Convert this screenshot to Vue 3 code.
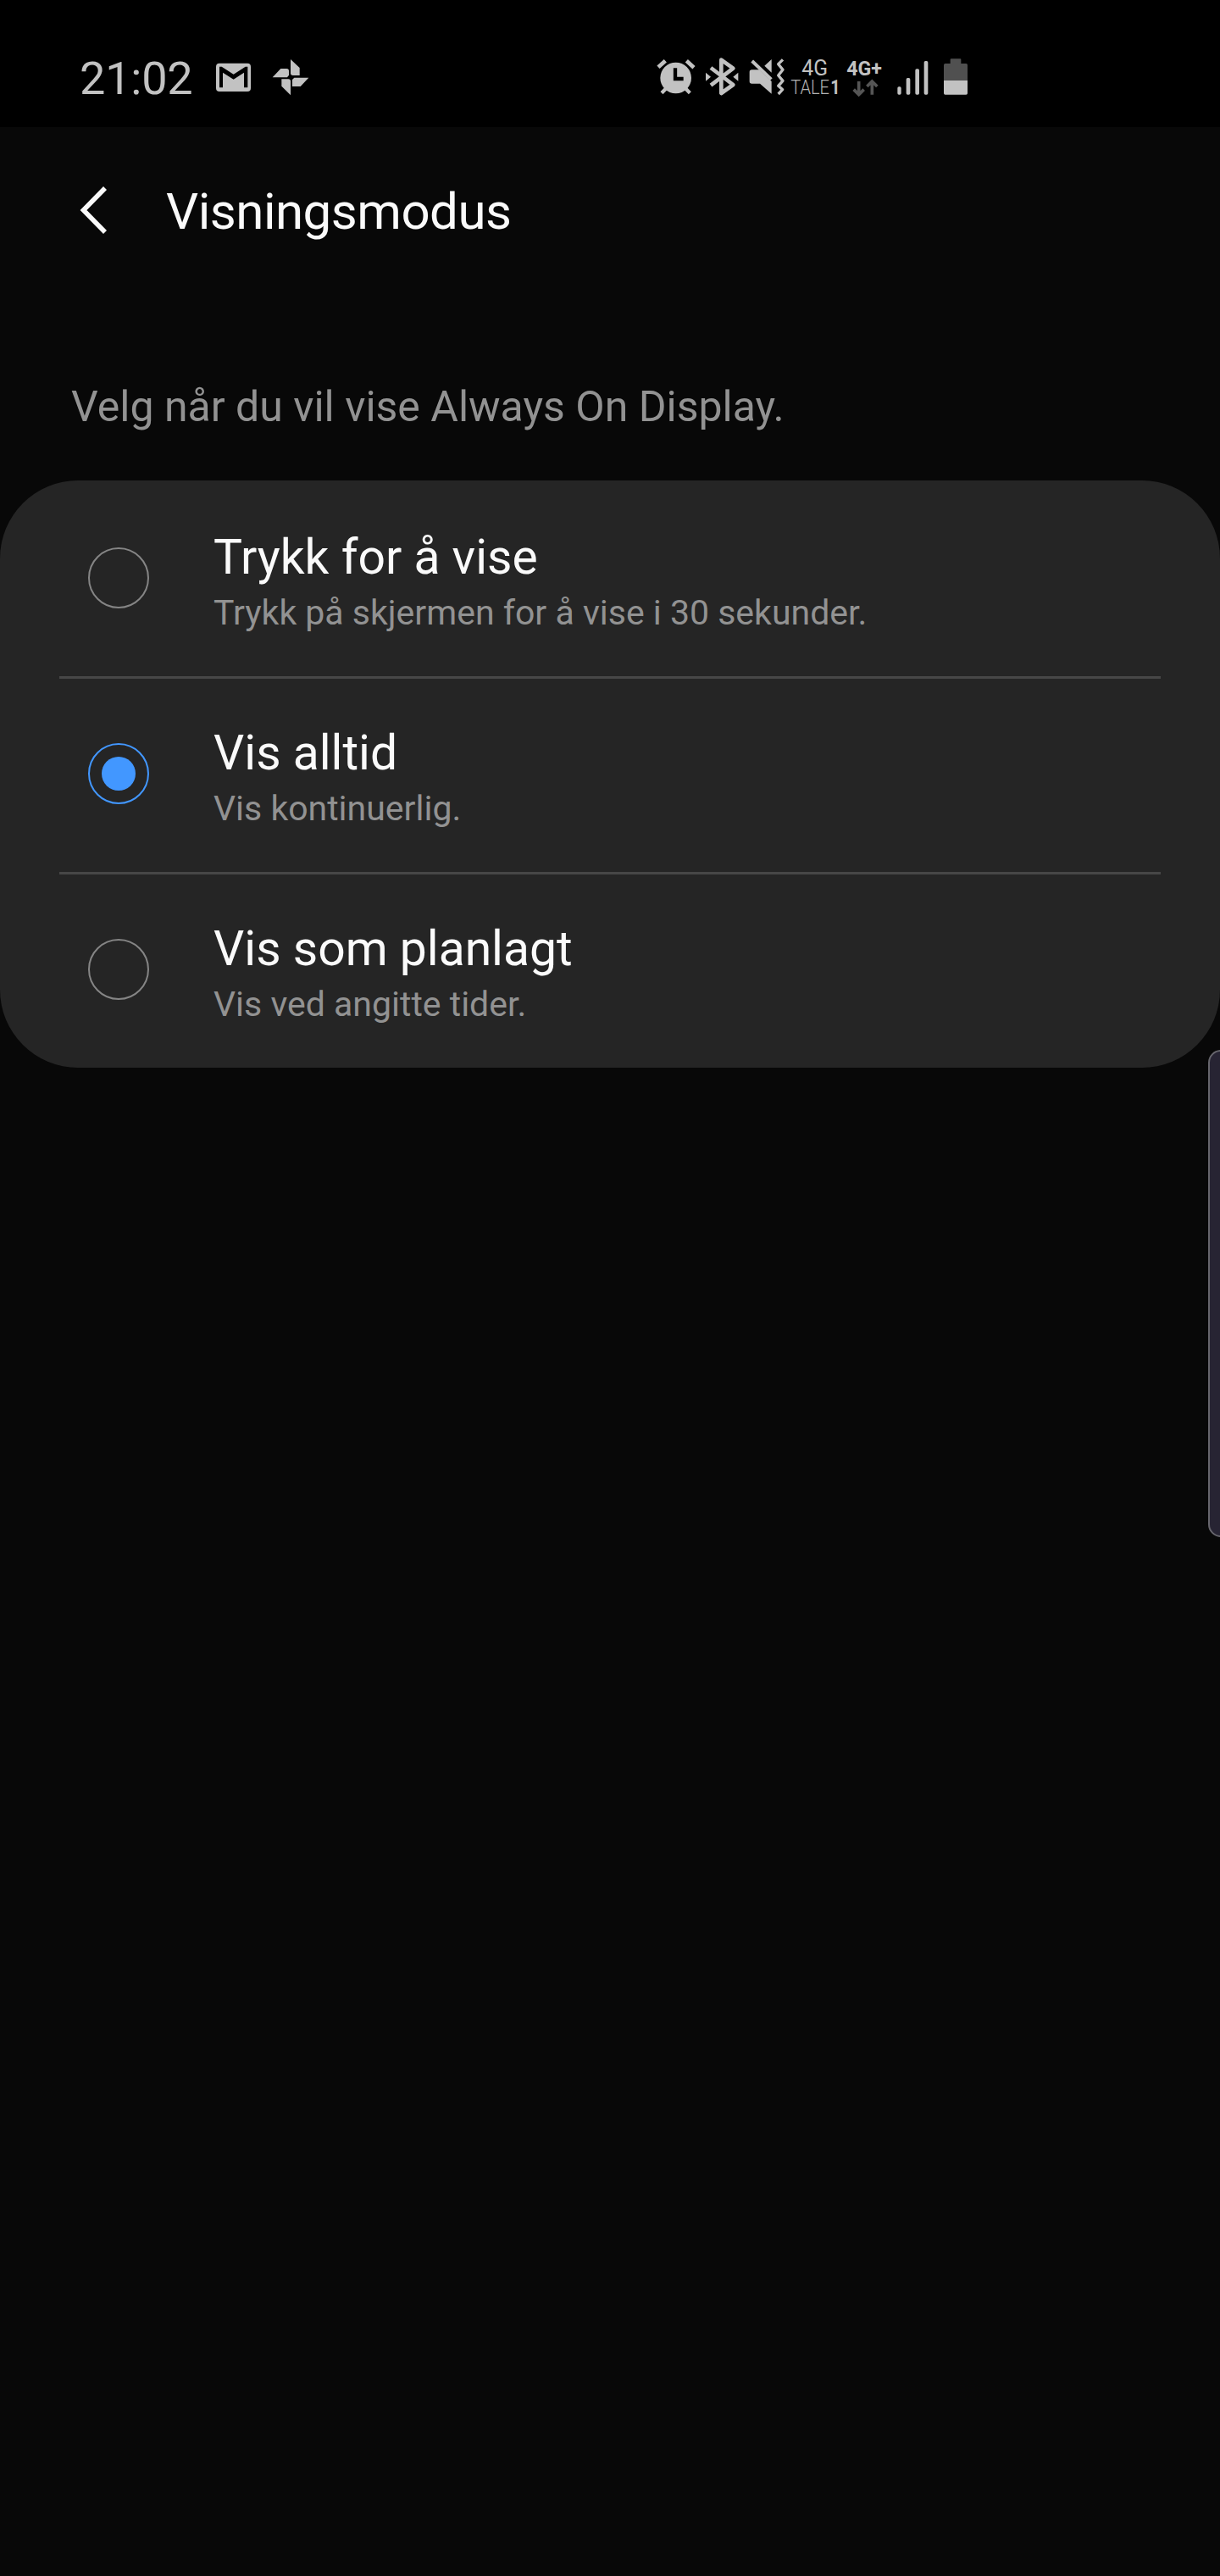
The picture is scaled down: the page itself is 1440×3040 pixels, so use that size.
<script setup>
import { ref } from 'vue'

const selected = ref('always')
const options = [
  { id: 'tap', title: 'Trykk for å vise', note: 'Trykk på skjermen for å vise i 30 sekunder.' },
  { id: 'always', title: 'Vis alltid', note: 'Vis kontinuerlig.' },
  { id: 'schedule', title: 'Vis som planlagt', note: 'Vis ved angitte tider.' },
]
</script>

<template>
  <div class="screen">
    <div class="status">
      <span class="clock">21:02</span>
      <svg class="mail" width="41" height="50" viewBox="525 45 123 150">
        <rect x="525" y="74" width="123" height="100" rx="12" fill="#c2c2c2" />
        <path d="M537 160V86H545L587 113L629 86H637V160H624V107L587 131L549 107V160Z" fill="#000" />
      </svg>
      <svg class="pinwheel" width="44" height="50" viewBox="721 45 132 150" fill="#c2c2c2">
        <path d="M787 60L819 90V117H795Q787 117 787 109Z" />
        <path d="M723 124L752 93H773Q781 93 781 101V116L775 124Z" />
        <path d="M755 130H779Q787 130 787 138V187L755 155Z" />
        <path d="M800 125H851L822 156H793V132Z" />
      </svg>
      <div class="system">
        <svg class="alarm" width="46" height="50" viewBox="46 45 138 150">
          <circle cx="114" cy="126" r="55" fill="#c2c2c2" />
          <path d="M52 88L77 65M152 65L178 89" stroke="#c2c2c2" stroke-width="14" />
          <path d="M64 179L80 163M148 163L164 179" stroke="#c2c2c2" stroke-width="13" />
          <path d="M112 91V129H141" stroke="#000" stroke-width="13" fill="none" />
        </svg>
        <svg class="bluetooth" width="40" height="50" viewBox="217 45 120 150">
          <path d="M238 90L317 150L275 180V62L317 92L238 152" fill="none" stroke="#c2c2c2" stroke-width="14" stroke-linejoin="round" />
          <path d="M220 107L238 122L220 137ZM335 107L317 122L335 137Z" fill="#c2c2c2" />
        </svg>
        <svg class="mute" width="42" height="50" viewBox="373 45 126 150">
          <path d="M383 97H409L453 138V182L412 146H383Q375 146 375 138V105Q375 97 383 97Z" fill="#c2c2c2" />
          <path d="M428 83L453 60V107Z" fill="#c2c2c2" />
          <path d="M384 66L452 131" stroke="#c2c2c2" stroke-width="12" />
          <path d="M493 61L477 77L493 97L477 117L493 136L477 154L492 167L477 183" fill="none" stroke="#c2c2c2" stroke-width="10" stroke-linejoin="round" />
        </svg>
        <svg class="carrier" width="58" height="50" viewBox="40 45 174 150" fill="#c2c2c2">
          <text x="80" y="116" font-size="76" textLength="92" lengthAdjust="spacingAndGlyphs">4G</text>
          <text x="41" y="184" font-size="69" font-weight="300" fill="#b4b4b4" textLength="137" lengthAdjust="spacingAndGlyphs">TALE</text>
          <text x="182" y="184" font-size="69" font-weight="700" textLength="34" lengthAdjust="spacingAndGlyphs">1</text>
        </svg>
        <svg class="data" width="43" height="50" viewBox="238 45 129 150">
          <text x="239" y="118" font-size="71" font-weight="700" fill="#c2c2c2" textLength="125" lengthAdjust="spacingAndGlyphs">4G+</text>
          <path d="M282 138V184M264 167L282 185L300 167M329 185V138M311 156L329 138L347 156" fill="none" stroke="#555" stroke-width="11" />
        </svg>
        <svg class="signal" width="37" height="50" viewBox="416 45 111 150" fill="#c2c2c2">
          <rect x="417" y="157" width="13" height="28" rx="5" />
          <rect x="448" y="126" width="14" height="59" rx="5" />
          <rect x="480" y="94" width="14" height="91" rx="5" />
          <rect x="511" y="66" width="14" height="119" rx="5" />
        </svg>
        <svg class="battery" width="28" height="50" viewBox="582 45 84 150">
          <path d="M587 75H605V61Q605 58 608 58H640Q643 58 643 61V75H661Q666 75 666 80V135H582V80Q582 75 587 75Z" fill="#505050" />
          <path d="M582 135H666V180Q666 185 661 185H587Q582 185 582 180Z" fill="#c2c2c2" />
        </svg>
      </div>
    </div>

    <header class="header">
      <svg class="back" width="36" height="60" viewBox="0 0 36 60">
        <path d="M32 4L6.500 30L32 56" fill="none" stroke="#fafafa" stroke-width="5.600" />
      </svg>
      <h1>Visningsmodus</h1>
    </header>

    <p class="intro">Velg når du vil vise Always On Display.</p>

    <main class="card">
      <div v-for="option in options" :key="option.id" class="option" @click="selected = option.id">
        <span class="radio" :class="{ on: selected === option.id }"></span>
        <div class="labels">
          <div class="title">{{ option.title }}</div>
          <div class="note">{{ option.note }}</div>
        </div>
      </div>
    </main>

    <div class="edge-handle"></div>
  </div>
</template>

<style>
body {
  margin: 0;
  background: #080808;
}
</style>

<style scoped>
.screen {
  position: relative;
  width: 1440px;
  height: 3040px;
  overflow: hidden;
  background: #080808;
  font-family: Roboto, sans-serif;
}
.status {
  box-sizing: border-box;
  display: flex;
  height: 150px;
  padding: 65px 296px 0 94px;
  background: #000;
}
.status svg {
  display: block;
  flex: none;
  overflow: visible;
}
.clock {
  width: 161px;
  font-size: 54px;
  line-height: 56px;
  letter-spacing: -0.2px;
  color: #c2c2c2;
}
.pinwheel {
  margin-left: 25px;
}
.system {
  display: flex;
  margin-left: auto;
  margin-right: 2px;
}
.bluetooth {
  margin-left: 11px;
}
.mute {
  margin-left: 12px;
}
.carrier {
  margin-left: 7px;
}
.data {
  margin-left: 8px;
}
.signal {
  margin-left: 17px;
}
.battery {
  margin-left: 18px;
}
.header {
  display: flex;
  align-items: center;
  height: 200px;
  padding-left: 92px;
}
.back {
  position: relative;
  top: -2px;
}
h1 {
  margin: 0 0 0 68px;
  font-size: 60px;
  font-weight: 400;
  line-height: 80px;
  letter-spacing: -0.5px;
  color: #fafafa;
}
.intro {
  margin: 100px 0 57px 84px;
  font-size: 50px;
  line-height: 60px;
  color: #929292;
}
.card {
  border-radius: 92px;
  background: #252525;
}
.option {
  box-sizing: border-box;
  display: flex;
  height: 231px;
  padding: 0 70px;
}
.option + .option {
  background: linear-gradient(#474747, #474747) 70px 0 / 1300px 3px no-repeat;
}
.radio {
  box-sizing: border-box;
  display: grid;
  place-items: center;
  width: 72px;
  height: 72px;
  margin: 79px 0 0 34px;
  border: 2px solid #858585;
  border-radius: 50%;
}
.radio.on {
  border-color: #4297ff;
}
.radio.on::after {
  content: '';
  width: 40px;
  height: 40px;
  border-radius: 50%;
  background: #4297ff;
}
.labels {
  margin: 56px 0 0 76px;
}
.title {
  font-size: 57px;
  line-height: 70px;
  color: #fafafa;
}
.note {
  font-size: 41px;
  line-height: 60px;
  color: #929292;
}
.edge-handle {
  position: absolute;
  top: 1239px;
  left: 1426px;
  box-sizing: border-box;
  width: 30px;
  height: 575px;
  border: 2px solid #66656c;
  border-radius: 18px;
  background: #272433;
}
</style>
